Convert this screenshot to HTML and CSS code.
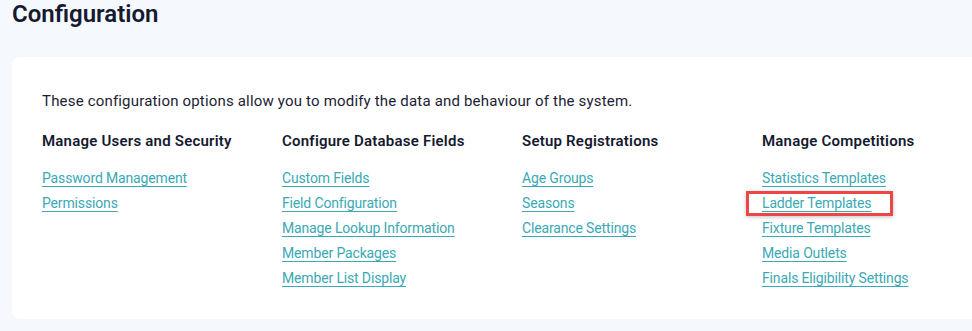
FILE: index.html
```html
<!DOCTYPE html>
<html lang="en">
<head>
    <meta charset="UTF-8">
    <meta name="viewport" content="width=device-width, initial-scale=1.0">
    <title>Configuration</title>
    <link rel="stylesheet" href="styles.css">
</head>
<body>
    <h1 class="page-title">Configuration</h1>

    <div class="card">
        <p class="intro">These configuration options allow you to modify the data and behaviour of the system.</p>

        <div class="columns">
            <div class="column">
                <h2>Manage Users and Security</h2>
                <ul>
                    <li><a href="#">Password Management</a></li>
                    <li><a href="#">Permissions</a></li>
                </ul>
            </div>
            <div class="column">
                <h2>Configure Database Fields</h2>
                <ul>
                    <li><a href="#">Custom Fields</a></li>
                    <li><a href="#">Field Configuration</a></li>
                    <li><a href="#">Manage Lookup Information</a></li>
                    <li><a href="#">Member Packages</a></li>
                    <li><a href="#">Member List Display</a></li>
                </ul>
            </div>
            <div class="column">
                <h2>Setup Registrations</h2>
                <ul>
                    <li><a href="#">Age Groups</a></li>
                    <li><a href="#">Seasons</a></li>
                    <li><a href="#">Clearance Settings</a></li>
                </ul>
            </div>
            <div class="column">
                <h2>Manage Competitions</h2>
                <ul>
                    <li><a href="#">Statistics Templates</a></li>
                    <li><span class="highlight"><a href="#">Ladder Templates</a></span></li>
                    <li><a href="#">Fixture Templates</a></li>
                    <li><a href="#">Media Outlets</a></li>
                    <li><a href="#">Finals Eligibility Settings</a></li>
                </ul>
            </div>
        </div>
    </div>
</body>
</html>
```

FILE: styles.css
```css
body {
    font-family: Roboto, "Liberation Sans", sans-serif;
    margin: 0;
    background: #f5f8fc;
    color: #1c1d33;
    overflow: hidden;
}

.page-title {
    margin: 0;
    padding: 0 12px;
    font-size: 24px;
    line-height: 28px;
    font-weight: 600;
    color: #151a30;
}

.card {
    margin: 29px 0 0 12px;
    padding: 34px 30px 28px;
    background: white;
    border-radius: 8px 0 0 8px;
}

.intro {
    margin: 0 0 20px;
    font-size: 15px;
    line-height: 20px;
    letter-spacing: 0.18px;
}

.columns {
    display: grid;
    grid-template-columns: repeat(4, 240px);
}

.column h2 {
    margin: 0 0 15px;
    font-size: 15px;
    line-height: 20px;
    font-weight: 600;
    letter-spacing: 0.22px;
    color: #151a30;
}

.column ul {
    list-style: none;
    margin: 0;
    padding: 0;
}

.column li {
    font-size: 14px;
    line-height: 25px;
    letter-spacing: -0.15px;
}

.column a {
    color: #3aa9b4;
    text-decoration: underline;
    text-underline-offset: 3px;
}

.highlight {
    position: relative;
    display: inline-block;
}

.highlight::after {
    content: "";
    position: absolute;
    top: 0;
    bottom: 0;
    left: -16px;
    right: -22px;
    border: 3px solid #ec4646;
    box-shadow: 0 1px 4px rgba(0,0,0,0.25);
    pointer-events: none;
}
```
